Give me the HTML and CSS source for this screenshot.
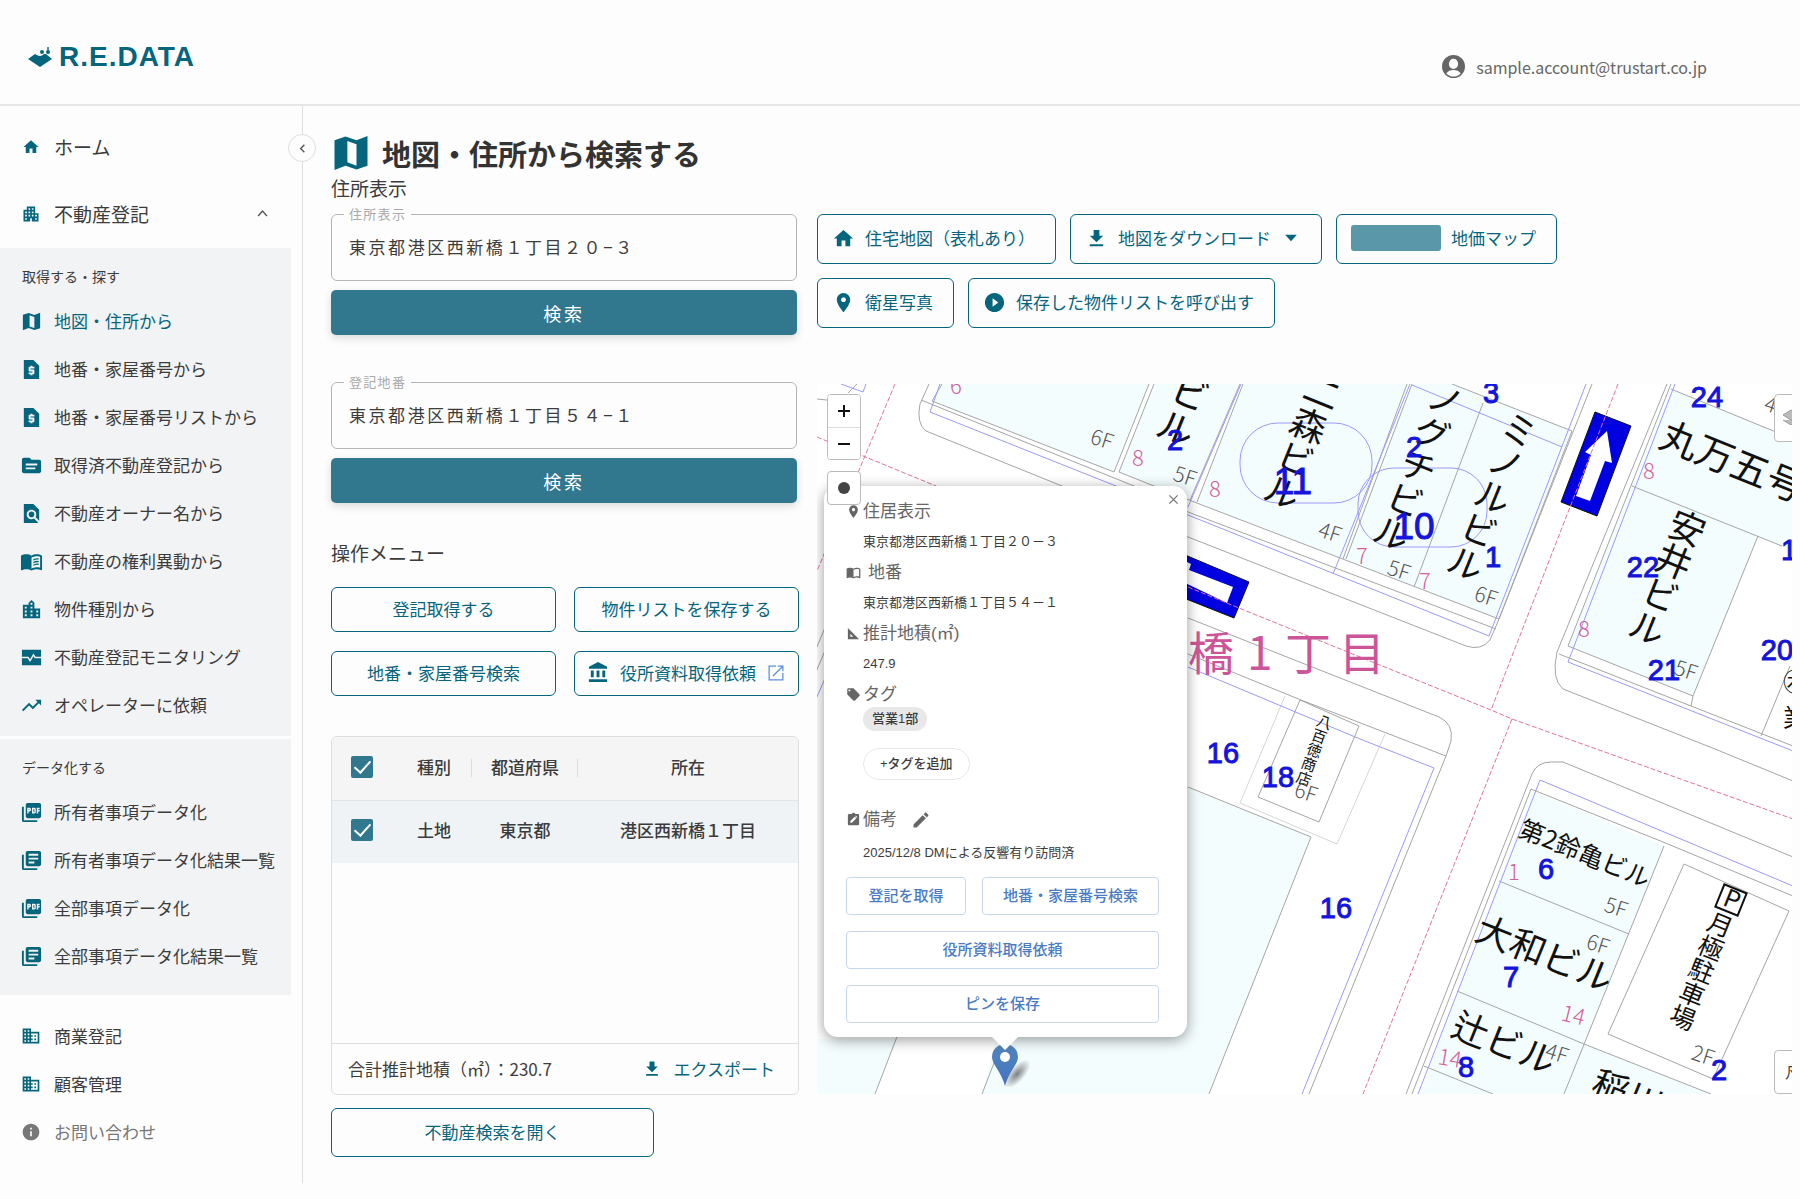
FILE: index.html
```html
<!DOCTYPE html>
<html lang="ja">
<head>
<meta charset="utf-8">
<meta name="viewport" content="width=device-width, initial-scale=1">
<title>R.E.DATA | 地図・住所から検索する</title>
<link rel="stylesheet" href="styles.css">
</head>
<body>
<svg class="sprite" aria-hidden="true">
  <symbol id="i-home" viewBox="0 0 24 24"><path d="M10 20v-6h4v6h5v-8h3L12 3 2 12h3v8z"/></symbol>
  <symbol id="i-apartment" viewBox="0 0 24 24"><path d="M17 11V3H7v4H3v14h8v-4h2v4h8V11h-4zM7 19H5v-2h2v2zm0-4H5v-2h2v2zm0-4H5V9h2v2zm4 4H9v-2h2v2zm0-4H9V9h2v2zm0-4H9V5h2v2zm4 8h-2v-2h2v2zm0-4h-2V9h2v2zm0-4h-2V5h2v2zm4 12h-2v-2h2v2zm0-4h-2v-2h2v2z"/></symbol>
  <symbol id="i-map" viewBox="0 0 24 24"><path d="M15 5.100L9 3 3 5.020v16.200l6-2.330 6 2.100 6-2.020V2.770L15 5.100zm0 13.790l-5-1.800V5.400l5 1.800z"/></symbol>
  <symbol id="i-quote" viewBox="0 0 24 24"><path d="M14 2H4v20h16V8l-6-6zm1 9h-4v1h3c.55 0 1 .45 1 1v3c0 .55-.45 1-1 1h-1v1h-2v-1H9v-2h4v-1h-3c-.55 0-1-.45-1-1v-3c0-.55.45-1 1-1h1V8h2v1h2v2z"/></symbol>
  <symbol id="i-source" viewBox="0 0 24 24"><path d="M20 6h-8l-2-2H4c-1.100 0-1.990.9-1.990 2L2 18c0 1.100.9 2 2 2h16c1.100 0 2-.9 2-2V8c0-1.100-.9-2-2-2zm-4 10H6v-2h10v2zm2-4H6v-2h12v2z"/></symbol>
  <symbol id="i-find" viewBox="0 0 24 24"><path d="M20 19.590V8l-6-6H4v20h15.190l-4.430-4.830c-.8.52-1.740.83-2.760.83-2.760 0-5-2.240-5-5s2.240-5 5-5 5 2.240 5 5c0 1.020-.31 1.960-.83 2.750L20 19.590zM9 13c0 1.660 1.340 3 3 3s3-1.340 3-3-1.340-3-3-3-3 1.340-3 3z"/></symbol>
  <symbol id="i-book" viewBox="0 0 24 24"><path d="M21 5c-1.110-.35-2.330-.5-3.500-.5-1.950 0-4.050.4-5.500 1.500-1.450-1.100-3.550-1.500-5.500-1.500S2.450 4.900 1 6v14.650c0 .25.25.5.5.5.1 0 .15-.05.25-.05C3.100 20.450 5.050 20 6.500 20c1.950 0 4.050.4 5.500 1.500 1.350-.85 3.800-1.500 5.500-1.500 1.650 0 3.350.3 4.750 1.050.1.050.15.050.25.050.25 0 .5-.25.5-.5V6c-.6-.45-1.250-.75-2-1zm0 13.500c-1.100-.35-2.300-.5-3.500-.5-1.700 0-4.150.65-5.500 1.500V8c1.350-.85 3.800-1.500 5.500-1.500 1.200 0 2.400.15 3.500.5v11.500z"/></symbol>
  <symbol id="i-booklines" viewBox="0 0 24 24"><use href="#i-book"/><path d="M14 9.500q3-1.300 5.500-.9v1.400q-2.600-.4-5.500.9zM14 12.300q3-1.300 5.500-.9v1.400q-2.600-.4-5.500.9zM14 15.100q3-1.300 5.500-.9v1.400q-2.600-.4-5.500.9z"/></symbol>
  <symbol id="i-city" viewBox="0 0 24 24"><path d="M15 11V5l-3-3-3 3v2H3v14h18V11h-6zm-8 8H5v-2h2v2zm0-4H5v-2h2v2zm0-4H5V9h2v2zm6 8h-2v-2h2v2zm0-4h-2v-2h2v2zm0-4h-2V9h2v2zm0-4h-2V5h2v2zm6 12h-2v-2h2v2zm0-4h-2v-2h2v2z"/></symbol>
  <symbol id="i-monitor" viewBox="0 0 24 24"><path fill-rule="evenodd" d="M2 4h20v16H2zM2 11.200v1.600h6l2.500 4 3.600-6 1.300 2H22v-1.600h-5.800L14 7.900l-3.500 6-1.700-2.700z"/></symbol>
  <symbol id="i-trend" viewBox="0 0 24 24"><path d="M16 6l2.290 2.290-4.880 4.880-4-4L2 16.590 3.410 18l6-6 4 4 6.300-6.290L22 12V6z"/></symbol>
  <symbol id="i-pdf" viewBox="0 0 24 24"><path d="M20 2H8c-1.100 0-2 .9-2 2v12c0 1.100.9 2 2 2h12c1.100 0 2-.9 2-2V4c0-1.100-.9-2-2-2zm-8.500 7.500c0 .83-.67 1.500-1.500 1.500H9v2H7.500V7H10c.83 0 1.500.67 1.500 1.500v1zm5 2c0 .83-.67 1.500-1.500 1.500h-2.500V7H15c.83 0 1.500.67 1.500 1.500v3zm4-3H19v1h1.500V11H19v2h-1.500V7h3v1.500zM9 9.500h1v-1H9v1zM4 6H2v14c0 1.100.9 2 2 2h14v-2H4V6zm10 5.500h1v-3h-1v3z"/></symbol>
  <symbol id="i-library" viewBox="0 0 24 24"><path d="M4 6H2v14c0 1.100.9 2 2 2h14v-2H4V6zm16-4H8c-1.100 0-2 .9-2 2v12c0 1.100.9 2 2 2h12c1.100 0 2-.9 2-2V4c0-1.100-.9-2-2-2zm-1 9H9V9h10v2zm-4 4H9v-2h6v2zm4-8H9V5h10v2z"/></symbol>
  <symbol id="i-business" viewBox="0 0 24 24"><path d="M12 7V3H2v18h20V7H12zM6 19H4v-2h2v2zm0-4H4v-2h2v2zm0-4H4V9h2v2zm0-4H4V5h2v2zm4 12H8v-2h2v2zm0-4H8v-2h2v2zm0-4H8V9h2v2zm0-4H8V5h2v2zm10 12h-8v-2h2v-2h-2v-2h2v-2h-2V9h8v10zm-2-8h-2v2h2v-2zm0 4h-2v2h2v-2z"/></symbol>
  <symbol id="i-info" viewBox="0 0 24 24"><path d="M12 2C6.480 2 2 6.480 2 12s4.480 10 10 10 10-4.480 10-10S17.520 2 12 2zm1 15h-2v-6h2v6zm0-8h-2V7h2v2z"/></symbol>
  <symbol id="i-download" viewBox="0 0 24 24"><path d="M19 9h-4V3H9v6H5l7 7 7-7zM5 18v2h14v-2H5z"/></symbol>
  <symbol id="i-place" viewBox="0 0 24 24"><path d="M12 2C8.130 2 5 5.130 5 9c0 5.250 7 13 7 13s7-7.750 7-13c0-3.870-3.130-7-7-7zm0 9.500c-1.380 0-2.500-1.120-2.500-2.500s1.120-2.500 2.500-2.500 2.500 1.120 2.500 2.500-1.120 2.500-2.500 2.500z"/></symbol>
  <symbol id="i-play" viewBox="0 0 24 24"><path d="M12 2C6.480 2 2 6.480 2 12s4.480 10 10 10 10-4.480 10-10S17.520 2 12 2zm-2 14.500v-9l6 4.500-6 4.500z"/></symbol>
  <symbol id="i-bank" viewBox="0 0 24 24"><path d="M4 10v7h3v-7H4zm6 0v7h3v-7h-3zM2 22h19v-3H2v3zm14-12v7h3v-7h-3zm-4.500-9L2 6v2h19V6l-9.500-5z"/></symbol>
  <symbol id="i-open" viewBox="0 0 24 24"><path d="M19.500 19.500h-15v-15H12V3H3v18h18v-9h-1.500zM14 3v1.500h4.400L7.800 15.100l1.100 1.100L19.500 5.600V10H21V3z"/></symbol>
  <symbol id="i-tag" viewBox="0 0 24 24"><path d="M21.410 11.580l-9-9C12.050 2.220 11.550 2 11 2H4c-1.100 0-2 .9-2 2v7c0 .55.22 1.050.59 1.420l9 9c.36.36.86.58 1.410.58.55 0 1.050-.22 1.410-.59l7-7c.37-.36.59-.86.59-1.410 0-.55-.23-1.060-.59-1.420zM5.500 7C4.670 7 4 6.330 4 5.500S4.670 4 5.500 4 7 4.670 7 5.500 6.330 7 5.500 7z"/></symbol>
  <symbol id="i-edit" viewBox="0 0 24 24"><path d="M3 17.250V21h3.750L17.810 9.940l-3.750-3.750L3 17.250zM20.710 7.040c.39-.39.39-1.020 0-1.410l-2.340-2.340c-.39-.39-1.020-.39-1.410 0l-1.830 1.830 3.750 3.750 1.830-1.830z"/></symbol>
  <symbol id="i-foot" viewBox="0 0 24 24"><path fill-rule="evenodd" d="M3 3v18h18zM7 12.500v4.500h4.500z"/></symbol>
  <symbol id="i-note" viewBox="0 0 24 24"><path fill-rule="evenodd" d="M19 3h-4.200a3 3 0 0 0-5.600 0H5a2 2 0 0 0-2 2v14c0 1.100.9 2 2 2h14a2 2 0 0 0 2-2V5a2 2 0 0 0-2-2zM7 17v-2.500l7-7 2.500 2.500-7 7zM17.300 9.200l-2.500-2.500 1-1 2.500 2.500z"/></symbol>
  <symbol id="i-user" viewBox="0 0 24 24"><path fill-rule="evenodd" d="M12 0a12 12 0 1 0 0 24 12 12 0 0 0 0-24zm0 4a4.800 5.300 0 0 1 0 10.600A4.800 5.300 0 0 1 12 4zM4.500 19.300q2.500-3.600 7.500-3.600t7.500 3.600a10.300 10.300 0 0 1-15 0z"/></symbol>
  <symbol id="i-left" viewBox="0 0 24 24"><path d="M15 6l-6 6 6 6" fill="none" stroke="currentColor" stroke-width="2.200"/></symbol>
  <symbol id="i-up" viewBox="0 0 24 24"><path d="M5 16l7-8 7 8" fill="none" stroke="currentColor" stroke-width="2.200"/></symbol>
  <symbol id="i-caret" viewBox="0 0 24 24"><path d="M5 8h14l-7 8z"/></symbol>
  <symbol id="i-close" viewBox="0 0 24 24"><path d="M3 3l18 18M21 3L3 21" fill="none" stroke="currentColor" stroke-width="3"/></symbol>
</svg>

<header class="topbar">
  <a class="logo" href="#">
    <svg class="logo-mark" viewBox="0 0 24 20" aria-hidden="true"><path d="M0 12l7-5q3 2 5 2t4-2h2l6 5-12 8z"/><circle cx="14" cy="5" r="2"/><circle cx="20" cy="5" r="2"/><path d="M19.300 0h1.400v3h-1.400z"/></svg>
    <span>R.E.DATA</span>
  </a>
  <a class="account" href="#"><svg class="icon icon-l"><use href="#i-user"/></svg>sample.account@trustart.co.jp</a>
</header>

<div class="shell">
  <nav class="sidebar" aria-label="メニュー">
    <button class="collapse" type="button" aria-label="メニューを閉じる"><svg class="icon icon-s"><use href="#i-left"/></svg></button>
    <a class="nav-top" href="#"><span class="slot"><svg class="icon icon-home"><use href="#i-home"/></svg></span>ホーム</a>
    <a class="nav-top" href="#"><span class="slot"><svg class="icon icon-m"><use href="#i-apartment"/></svg></span>不動産登記<svg class="icon icon-s chevron"><use href="#i-up"/></svg></a>

    <section class="nav-panel">
      <h2>取得する・探す</h2>
      <a class="nav-item active" href="#"><span class="slot"><svg class="icon icon-l"><use href="#i-map"/></svg></span>地図・住所から</a>
      <a class="nav-item" href="#"><span class="slot"><svg class="icon icon-l"><use href="#i-quote"/></svg></span>地番・家屋番号から</a>
      <a class="nav-item" href="#"><span class="slot"><svg class="icon icon-l"><use href="#i-quote"/></svg></span>地番・家屋番号リストから</a>
      <a class="nav-item" href="#"><span class="slot"><svg class="icon icon-l"><use href="#i-source"/></svg></span>取得済不動産登記から</a>
      <a class="nav-item" href="#"><span class="slot"><svg class="icon icon-l"><use href="#i-find"/></svg></span>不動産オーナー名から</a>
      <a class="nav-item" href="#"><span class="slot"><svg class="icon icon-l"><use href="#i-booklines"/></svg></span>不動産の権利異動から</a>
      <a class="nav-item" href="#"><span class="slot"><svg class="icon icon-l"><use href="#i-city"/></svg></span>物件種別から</a>
      <a class="nav-item" href="#"><span class="slot"><svg class="icon icon-l"><use href="#i-monitor"/></svg></span>不動産登記モニタリング</a>
      <a class="nav-item" href="#"><span class="slot"><svg class="icon icon-l"><use href="#i-trend"/></svg></span>オペレーターに依頼</a>
    </section>

    <section class="nav-panel nav-panel-last">
      <h2>データ化する</h2>
      <a class="nav-item" href="#"><span class="slot"><svg class="icon icon-l"><use href="#i-pdf"/></svg></span>所有者事項データ化</a>
      <a class="nav-item" href="#"><span class="slot"><svg class="icon icon-l"><use href="#i-library"/></svg></span>所有者事項データ化結果一覧</a>
      <a class="nav-item" href="#"><span class="slot"><svg class="icon icon-l"><use href="#i-pdf"/></svg></span>全部事項データ化</a>
      <a class="nav-item" href="#"><span class="slot"><svg class="icon icon-l"><use href="#i-library"/></svg></span>全部事項データ化結果一覧</a>
    </section>

    <a class="nav-item" href="#"><span class="slot"><svg class="icon icon-m"><use href="#i-business"/></svg></span>商業登記</a>
    <a class="nav-item" href="#"><span class="slot"><svg class="icon icon-m"><use href="#i-business"/></svg></span>顧客管理</a>
    <a class="nav-item muted" href="#"><span class="slot"><svg class="icon icon-m"><use href="#i-info"/></svg></span>お問い合わせ</a>
  </nav>

  <main class="main">
    <h1><svg class="icon icon-title"><use href="#i-map"/></svg>地図・住所から検索する</h1>
    <h2 class="section-title">住所表示</h2>

    <div class="columns">
      <div class="search-col">
        <form class="search">
          <div class="field"><label for="address">住所表示</label><input id="address" type="text" value="東京都港区西新橋１丁目２０−３"></div>
          <button class="btn-primary" type="button">検索</button>
        </form>
        <form class="search">
          <div class="field"><label for="lot">登記地番</label><input id="lot" type="text" value="東京都港区西新橋１丁目５４−１"></div>
          <button class="btn-primary" type="button">検索</button>
        </form>

        <h2 class="section-title menu-title">操作メニュー</h2>
        <div class="menu-grid">
          <button class="btn-outline" type="button">登記取得する</button>
          <button class="btn-outline" type="button">物件リストを保存する</button>
          <button class="btn-outline" type="button">地番・家屋番号検索</button>
          <button class="btn-outline linked" type="button"><svg class="icon icon-l"><use href="#i-bank"/></svg>役所資料取得依頼<svg class="icon icon-m external"><use href="#i-open"/></svg></button>
        </div>

        <div class="list-card">
          <table>
            <colgroup><col class="c-check"><col class="c-kind"><col class="c-pref"><col></colgroup>
            <thead><tr><th><input type="checkbox" checked aria-label="すべて選択"></th><th class="sep">種別</th><th class="sep">都道府県</th><th>所在</th></tr></thead>
            <tbody><tr><td><input type="checkbox" checked aria-label="行を選択"></td><td>土地</td><td>東京都</td><td>港区西新橋１丁目</td></tr></tbody>
          </table>
          <div class="list-foot"><span>合計推計地積（㎡）：230.7</span><button class="btn-text" type="button"><svg class="icon icon-m"><use href="#i-download"/></svg>エクスポート</button></div>
        </div>
        <button class="btn-outline btn-open" type="button">不動産検索を開く</button>
      </div>

      <div class="map-col">
        <div class="toolbar">
          <button class="btn-outline tool" type="button"><svg class="icon icon-l"><use href="#i-home"/></svg>住宅地図（表札あり）</button>
          <button class="btn-outline tool" type="button"><svg class="icon icon-l"><use href="#i-download"/></svg>地図をダウンロード<svg class="icon icon-m"><use href="#i-caret"/></svg></button>
          <button class="btn-outline tool" type="button"><span class="swatch"></span>地価マップ</button>
          <button class="btn-outline tool" type="button"><svg class="icon icon-l"><use href="#i-place"/></svg>衛星写真</button>
          <button class="btn-outline tool" type="button"><svg class="icon icon-l"><use href="#i-play"/></svg>保存した物件リストを呼び出す</button>
        </div>

        <div class="map">
          <svg class="map-canvas" viewBox="816 385 976 710" preserveAspectRatio="xMinYMin slice" role="img" aria-label="住宅地図">
            <g class="parcel">
              <path d="M941 385L931 402 1113 473 1148 385zM1153 385L1118 473 1188 501 1239 385zM1242 385L1196 503 1342 560 1409 385zM1411 385L1343 560 1498 620 1571 432 1451 385z"/>
              <path d="M1670 390L1792 440V552L1631 487zM1631 487L1757 537 1692 697 1567 647z"/>
              <path d="M1187 788L1310 838 1208 1095H981L1000 1020zM816 1040H897L874 1095H816z"/>
              <path d="M1532 792L1663 847 1583 1045 1710 1095H1419z"/>
            </g>
            <g class="gray">
              <path d="M928 385L919 405Q915 424 925 432L1061 487 1187 538 1465 647Q1480 652 1489 641L1498 620 1591 385"/>
              <path d="M920 401L1133 487 1187 513 1495 630M941 385L931 402 1113 473 1148 385M1153 385L1118 473 1188 501 1498 620M1239 385L1189 501M1242 385L1196 503M1406 385L1342 560M1411 385L1345 560M1451 385L1571 432M1482 404L1413 588M1571 432L1498 620"/>
              <path d="M1666 385L1556 653Q1550 680 1562 690L1714 750 1792 782M1670 385L1567 647 1692 697 1757 537M1670 390L1792 440M1631 487L1781 547M1558 655L1690 707 1792 747M1692 697L1690 707M1789 667L1760 737"/>
              <path d="M1187 619L1438 718Q1453 725 1450 742L1445 757 1308 1095M1187 655L1300 701 1445 757M1299 701L1358 727 1318 823 1257 798zM1187 788L1310 838 1208 1095"/>
              <path d="M1405 1095L1531 775Q1536 763 1550 763H1562L1792 858M1411 1095L1530 790 1662 843 1792 897M1663 847L1563 1095M1498 882L1628 935M1456 992L1583 1045 1710 1095M1423 1067L1492 1095M1683 865L1788 912 1712 1080 1607 1035z"/>
              <path d="M897 1035L874 1095M1003 1038L981 1095M816 400L835 402M847 394L856 385M826 624L815 650M826 647L815 673"/>
            </g>
            <path class="faint" d="M1284 697L1239 804 1336 845 1384 735"/>
            <g class="blue-line">
              <path d="M939 385L929 413 1115 487 1187 516 1488 637 1585 385M1187 508L1240 385M1409 385L1332 575M1411 386L1561 448M840 385L862 393 865 385M826 675L815 700"/>
              <path d="M1674 385L1567 663 1792 752M1187 668L1359 740 1433 769 1301 1095M1417 1095L1539 781 1792 887"/>
              <rect x="1239" y="424" width="132" height="80" rx="38"/><rect x="1357" y="469" width="129" height="79" rx="36"/>
            </g>
            <g class="arrow">
              <path d="M1594 413L1630 427 1596 517 1560 503zM1170 550L1248 583 1233 619 1160 590z"/>
              <path class="arrow-in" d="M1606 432L1584 453 1590 456 1575 497 1589 502 1604 462 1611 464zM1180 582V560L1190 565 1188 571 1232 588 1226 604z"/>
            </g>
            <g class="pink-line">
              <path d="M894 385L816 572M816 438L935 487M1187 588L1233 607 1490 711 1511 720 1792 820M1617 385L1490 711M1511 720L1362 1095"/>
            </g>
            <text class="district" x="1187 1246 1284 1338" y="671">橋1丁目</text>
            <g class="name">
              <text class="tate n40" transform="translate(1196 376) rotate(22)">ビル</text>
              <text class="tate n36" transform="translate(1328 376) rotate(22)">二森ビル</text>
              <text class="tate n36" transform="translate(1451 384) rotate(22)">ノグチビル</text>
              <text class="tate n36" transform="translate(1525 414) rotate(22)">ミノルビル</text>
              <text class="tate n36" transform="translate(1693 512) rotate(22)">安井ビル</text>
              <text class="n40" transform="translate(1656 447) rotate(22)">丸万五号</text>
              <text class="n24" transform="translate(1516 837) rotate(22)">第2鈴亀ビル</text>
              <text class="n36" transform="translate(1472 940) rotate(22)">大和ビル</text>
              <text class="n36" transform="translate(1448 1036) rotate(22)">辻ビル</text>
              <text class="n36" transform="translate(1588 1094) rotate(22)">稲川</text>
              <text class="tate n24" transform="translate(1724 914) rotate(22)">月極駐車場</text>
              <text class="tate n16" transform="translate(1326 716) rotate(20)">八百徳商店</text>
              <g transform="translate(1730 901) rotate(22)"><rect x="-12" y="-12" width="24" height="24"/><text class="n24" x="-7" y="8">P</text></g>
              <text class="n24" x="1782" y="692">㊍</text><text class="n24" x="1782" y="728">業</text>
            </g>
            <g class="floor">
              <text transform="translate(1088 444) rotate(18)">6F</text><text transform="translate(1171 481) rotate(18)">5F</text><text transform="translate(1316 537) rotate(18)">4F</text>
              <text transform="translate(1385 575) rotate(18)">5F</text><text transform="translate(1472 601) rotate(18)">6F</text><text transform="translate(1762 411) rotate(18)">4F</text>
              <text transform="translate(1672 675) rotate(18)">5F</text><text transform="translate(1292 797) rotate(18)">6F</text><text transform="translate(1602 912) rotate(18)">5F</text>
              <text transform="translate(1584 949) rotate(18)">6F</text><text transform="translate(1543 1058) rotate(18)">4F</text><text transform="translate(1689 1060) rotate(18)">2F</text>
            </g>
            <g class="pink-no">
              <text x="949" y="395">6</text><text x="1131" y="467">8</text><text x="1208" y="498">8</text><text x="1355" y="565">7</text><text x="1418" y="590">7</text><text x="1642" y="480">8</text><text x="1577" y="638">8</text>
              <text x="1507" y="881">1</text><text transform="translate(1559 1021) rotate(14)">14</text><text transform="translate(1436 1065) rotate(10)">14</text>
            </g>
            <g class="blue-no">
              <text x="1174" y="451">2</text><text x="1490" y="404">3</text><text x="1413" y="458">2</text><text x="1492" y="568">1</text><text x="1706" y="408">24</text><text x="1642" y="578">22</text>
              <text x="1663" y="681">21</text><text x="1776" y="661">20</text><text x="1788" y="561">1</text><text x="1222" y="764">16</text><text x="1277" y="788">18</text><text x="1335" y="919">16</text>
              <text x="1545" y="880">6</text><text x="1510" y="988">7</text><text x="1465" y="1078">8</text><text x="1718" y="1081">2</text>
              <text class="big" x="1292" y="495">11</text><text class="big" x="1413" y="540">10</text>
            </g>
          </svg>

          <svg class="pin" viewBox="0 0 52 44" aria-hidden="true">
            <defs>
              <linearGradient id="pinfill" x1="0" y1="0" x2="0" y2="1"><stop offset="0" stop-color="#5286bd"/><stop offset="1" stop-color="#4472c0"/></linearGradient>
              <radialGradient id="pinshade"><stop offset="0" stop-color="#000" stop-opacity=".5"/><stop offset="1" stop-color="#000" stop-opacity="0"/></radialGradient>
            </defs>
            <ellipse cx="25" cy="31" rx="18" ry="8" transform="rotate(-48 25 31)" fill="url(#pinshade)"/>
            <path d="M13 43Q11 35 4 24 0 18 0 14A13 13 0 0 1 26 14Q26 18 22 24 15 35 13 43z" fill="url(#pinfill)"/>
            <circle cx="13" cy="14" r="5" fill="#fff"/>
          </svg>

          <section class="popup">
            <button class="popup-close" type="button" aria-label="閉じる"><svg class="icon icon-xs"><use href="#i-close"/></svg></button>
            <h3><svg class="icon icon-s"><use href="#i-place"/></svg>住居表示</h3>
            <p>東京都港区西新橋１丁目２０－３</p>
            <h3 class="wide"><svg class="icon icon-s"><use href="#i-book"/></svg>地番</h3>
            <p>東京都港区西新橋１丁目５４－１</p>
            <h3><svg class="icon icon-s"><use href="#i-foot"/></svg>推計地積(㎡)</h3>
            <p>247.9</p>
            <h3><svg class="icon icon-s"><use href="#i-tag"/></svg>タグ</h3>
            <div class="tags"><span class="chip">営業1部</span><button class="chip-add" type="button">+タグを追加</button></div>
            <h3><svg class="icon icon-s"><use href="#i-note"/></svg>備考<button class="edit" type="button" aria-label="備考を編集"><svg class="icon icon-m"><use href="#i-edit"/></svg></button></h3>
            <p class="memo">2025/12/8 DMによる反響有り訪問済</p>
            <div class="popup-actions">
              <button type="button">登記を取得</button><button type="button">地番・家屋番号検索</button>
              <button class="full" type="button">役所資料取得依頼</button>
              <button class="full" type="button">ピンを保存</button>
            </div>
          </section>

          <div class="map-controls">
            <div class="zoom"><button type="button" aria-label="拡大"><svg viewBox="0 0 14 14"><path d="M7 1v12M1 7h12"/></svg></button><button type="button" aria-label="縮小"><svg viewBox="0 0 14 14"><path d="M1 7h12"/></svg></button></div>
            <button class="locate" type="button" aria-label="現在地"><svg viewBox="0 0 14 14"><circle cx="7" cy="7" r="6"/></svg></button>
          </div>
          <button class="map-layers" type="button" aria-label="レイヤー"><svg viewBox="0 0 22 16"><path d="M0 6l8-5 8 5-8 5zM0 11l8 5 8-5"/></svg></button>
          <button class="map-legend" type="button">凡例</button>
        </div>
      </div>
    </div>
  </main>
</div>
</body>
</html>
```

FILE: styles.css
```css
:root {
  --teal: #05657d;
  --teal-fill: #31788f;
  --ink: #3c3c3c;
  --line: #dedede;
  --gray: #666;
}

* { box-sizing: border-box; }

body {
  margin: 0;
  min-height: 100vh;
  background: #fdfdfd;
  color: var(--ink);
  font-family: "Noto Sans CJK JP", sans-serif;
  font-size: 17px;
  line-height: 24px;
}

a { color: inherit; text-decoration: none; }
button, input { font: inherit; color: inherit; }
button { cursor: pointer; background: none; border: 0; padding: 0; }
h1, h2, h3, p { margin: 0; font-weight: 400; }

.sprite { display: none; }
.icon { display: block; flex: none; fill: currentColor; }
.icon-xs { width: 11px; height: 11px; }
.icon-s { width: 15px; height: 15px; }
.icon-home { width: 18px; height: 18px; }
.icon-m { width: 20px; height: 20px; }
.icon-l { width: 23px; height: 23px; }
.icon-title { width: 44px; height: 44px; color: var(--teal); }

/* Top bar */
.topbar {
  display: flex;
  align-items: center;
  justify-content: space-between;
  height: 106px;
  padding: 9px 93px 0 28px;
  border-bottom: 2px solid #e6e6e6;
}
.logo {
  display: flex;
  align-items: center;
  gap: 7px;
  color: var(--teal);
  font: 700 28px/32px "Liberation Sans", sans-serif;
  letter-spacing: 1px;
}
.logo-mark { width: 24px; height: 20px; fill: currentColor; }
.account {
  display: flex;
  align-items: center;
  gap: 11px;
  margin-top: 20px;
  color: #666;
  font-size: 16px;
}

/* Shell */
.shell { display: flex; align-items: flex-start; }
.sidebar {
  position: relative;
  flex: none;
  width: 303px;
  padding: 7px 11px 27px 0;
  border-right: 1px solid var(--line);
}
.collapse {
  position: absolute;
  top: 28px;
  right: -14px;
  display: grid;
  place-items: center;
  width: 28px;
  height: 28px;
  border: 1px solid var(--line);
  border-radius: 50%;
  background: #fdfdfd;
  color: #555;
}
.nav-top, .nav-item {
  display: flex;
  align-items: center;
  gap: 11px;
  padding-left: 19px;
}
.nav-top { height: 67px; font-size: 19px; }
.nav-item { height: 48px; }
.slot { display: grid; place-items: center; width: 24px; color: var(--teal); }
.chevron { margin: 0 21px 0 auto; color: #555; }
.active { color: var(--teal); }
.muted, .muted .slot { color: #777; }
.nav-panel { margin-top: 1px; padding: 11px 0 7px; background: #f1f3f5; }
.nav-panel + .nav-panel { margin-top: 3px; }
.nav-panel-last { padding-bottom: 15px; margin-bottom: 17px; }
.nav-panel h2 { padding-left: 22px; margin-bottom: 4px; font-size: 14px; line-height: 34px; }

/* Main */
.main { flex: 1; min-width: 0; padding: 27px 8px 24px 28px; }
.main h1 {
  display: flex;
  align-items: center;
  gap: 9px;
  height: 40px;
  font-size: 29px;
  font-weight: 700;
  color: #333;
}
.main h1 .icon { margin-left: -2px; }
.section-title { font-size: 19px; line-height: 30px; }
.columns { display: flex; gap: 18px; margin-top: 11px; }
.search-col { flex: none; width: 468px; }
.map-col { flex: 1; min-width: 0; }

.search { display: grid; gap: 9px; margin-bottom: 47px; padding-right: 2px; }
.field { position: relative; }
.field label {
  position: absolute;
  top: -10px;
  left: 13px;
  padding: 0 5px;
  background: #fdfdfd;
  color: #aaa;
  font-size: 13px;
  line-height: 20px;
  letter-spacing: .1em;
}
.field input {
  display: block;
  width: 100%;
  height: 67px;
  padding: 0 17px 2px;
  border: 1px solid #b5b5b5;
  border-radius: 6px;
  background: none;
  letter-spacing: .15em;
}
.btn-primary {
  height: 45px;
  border-radius: 5px;
  background: var(--teal-fill);
  box-shadow: 0 3px 8px rgba(0, 0, 0, .14);
  color: #fff;
  font-size: 18px;
  letter-spacing: .15em;
}
.menu-title { margin-top: -12px; margin-bottom: 19px; }
.menu-grid { display: grid; grid-template-columns: 1fr 1fr; gap: 19px 18px; }
.btn-outline {
  display: flex;
  align-items: center;
  justify-content: center;
  gap: 10px;
  height: 45px;
  padding-bottom: 2px;
  border: 1px solid var(--teal);
  border-radius: 6px;
  color: var(--teal);
  white-space: nowrap;
}
.external { color: #5b8dde; }

.list-card {
  display: flex;
  flex-direction: column;
  min-height: 359px;
  margin: 40px 0 13px;
  border: 1px solid var(--line);
  border-radius: 6px;
  overflow: hidden;
}
table { width: 100%; border-collapse: collapse; table-layout: fixed; }
.c-check { width: 64px; }
.c-kind { width: 76px; }
.c-pref { width: 106px; }
th, td { height: 63px; padding: 0 0 3px; font-weight: 500; text-align: center; }
th { background: #f5f5f5; border-bottom: 1px solid #e3e3e3; }
td { background: #eff3f6; }
th.sep {
  background: linear-gradient(#ddd, #ddd) right center / 1px 18px no-repeat #f5f5f5;
}
th input, td input {
  appearance: none;
  display: grid;
  place-items: center;
  width: 22px;
  height: 22px;
  margin: 0 auto 0 19px;
  border-radius: 2px;
  background: var(--teal-fill);
}
th input::before, td input::before {
  content: "";
  width: 7px;
  height: 14px;
  margin-bottom: 4px;
  border: solid #fff;
  border-width: 0 2px 2px 0;
  transform: rotate(42deg);
}
.list-foot {
  display: flex;
  align-items: center;
  justify-content: space-between;
  height: 51px;
  margin-top: auto;
  padding: 0 23px 0 16px;
  border-top: 1px solid var(--line);
}
.btn-text { display: flex; align-items: center; gap: 12px; color: var(--teal); }
.btn-open { width: 323px; height: 49px; }

/* Toolbar */
.toolbar { display: flex; flex-wrap: wrap; gap: 14px; padding-right: 200px; }
.tool { height: 50px; padding: 0 20px 2px 14px; }
.swatch { width: 90px; height: 26px; border-radius: 3px; background: #5a97a9; }

/* Map */
.map {
  position: relative;
  height: 710px;
  margin-top: 56px;
  overflow: hidden;
  background: #fff;
}
.map-canvas { display: block; width: 100%; height: 100%; }
.map-canvas text { font-family: "Noto Sans CJK JP", sans-serif; }
.parcel { fill: #f4fdfe; }
.gray, .faint, .blue-line, .pink-line { fill: none; }
.gray { stroke: #a5a5a5; }
.faint { stroke: #d5d5d5; }
.blue-line { stroke: #9a9af8; }
.pink-line { stroke: #df7398; stroke-dasharray: 5 2; }
.arrow { fill: #0000e0; stroke: #111; }
.arrow-in { fill: #fff; stroke: none; }
.district { fill: #cc5599; font-size: 46px; font-weight: 400; }
.name { fill: #111; font-weight: 400; }
.name rect { fill: none; stroke: #111; stroke-width: 2; }
.tate { writing-mode: vertical-rl; }
.n16 { font-size: 15px; }
.n24 { font-size: 25px; }
.n36 { font-size: 36px; }
.n40 { font-size: 38px; }
.map-canvas .floor text { fill: #555; font-size: 21px; font-weight: 300; }
.map-canvas .pink-no text { fill: #d4609a; font-size: 22px; font-weight: 300; }
.map-canvas .blue-no text { fill: #1414dc; font-family: "Liberation Sans", sans-serif; font-size: 29px; text-anchor: middle; stroke: #1414dc; }
.map-canvas .blue-no .big { font-size: 37px; }

.pin { position: absolute; left: 175px; top: 659px; width: 52px; height: 44px; }

.popup {
  position: absolute;
  left: 7px;
  top: 102px;
  width: 363px;
  padding: 10px 28px 14px 22px;
  border-radius: 14px;
  background: #fff;
  box-shadow: 0 3px 14px rgba(0, 0, 0, .4);
  font-family: "Liberation Sans", "Noto Sans CJK JP", sans-serif;
  font-size: 13px;
}
.popup::after {
  content: "";
  position: absolute;
  left: 167px;
  bottom: -13px;
  border: 14px solid transparent;
  border-width: 14px 14px 0;
  border-top-color: #fff;
}
.popup-close { position: absolute; top: 8px; right: 8px; color: #777; }
.popup h3 {
  display: flex;
  align-items: center;
  gap: 2px;
  height: 31px;
  color: var(--gray);
  font-size: 17px;
}
.popup h3.wide { gap: 7px; }
.popup p { padding-left: 17px; line-height: 30px; }
.popup .memo { margin-top: 3px; }
.tags { display: grid; justify-items: start; gap: 17px; margin-top: -3px; padding: 0 0 24px 17px; }
.chip { padding: 0 9px; border-radius: 12px; background: #e8e8e8; font-weight: 500; }
.chip-add { height: 32px; padding: 0 16px; border: 1px solid #e8e8e8; border-radius: 16px; font-weight: 500; }
.edit { margin-left: 12px; color: var(--gray); }
.popup-actions { display: grid; grid-template-columns: 120px 1fr; gap: 16px; margin-top: 9px; }
.popup-actions button {
  height: 38px;
  border: 1px solid #c6d6ef;
  border-radius: 4px;
  color: #4a7cc4;
  font-size: 15px;
  font-weight: 500;
}
.popup-actions .full { grid-column: 1 / -1; }

.map-controls { position: absolute; left: 10px; top: 10px; display: grid; gap: 11px; }
.map-controls button { display: grid; place-items: center; width: 32px; height: 32px; background: #fff; }
.map-controls svg { width: 14px; height: 14px; stroke: #111; stroke-width: 2; fill: #444; }
.map-controls .locate svg { stroke: none; }
.zoom, .map-controls .locate { border: 1px solid #bbb; border-radius: 4px; overflow: hidden; }
.zoom button + button { border-top: 1px solid #ddd; }
.map-controls .locate { width: 34px; height: 34px; }
.map-layers, .map-legend {
  position: absolute;
  right: -30px;
  width: 48px;
  height: 48px;
  padding-left: 8px;
  border: 1px solid #bbb;
  border-radius: 4px;
  background: #fff;
  text-align: left;
}
.map-layers { top: 10px; }
.map-layers svg { width: 22px; height: 16px; fill: #bbb; stroke: #999; }
.map-legend { bottom: 0; height: 44px; padding-left: 10px; font-size: 15px; }
```
